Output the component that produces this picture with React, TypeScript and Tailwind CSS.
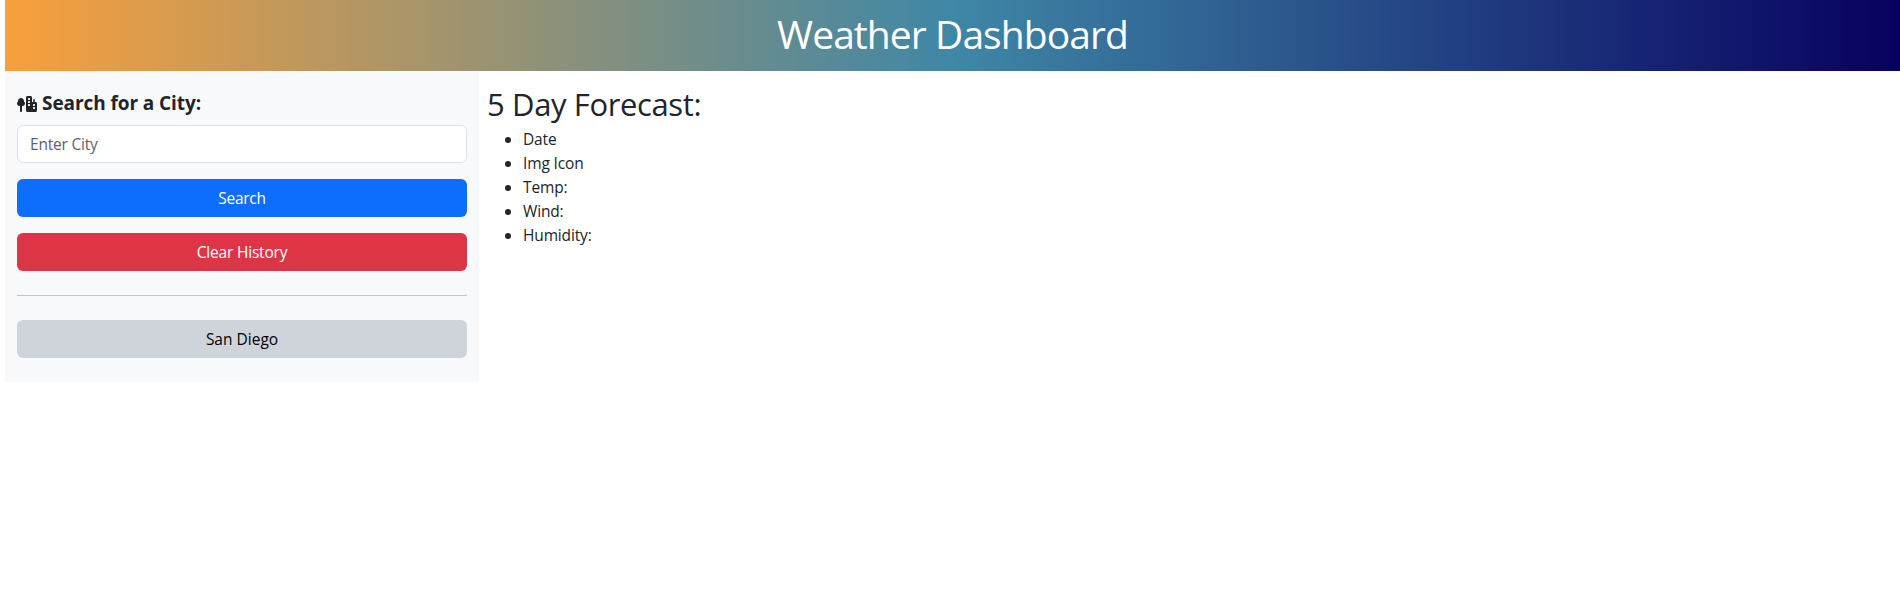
import { FaTreeCity } from "react-icons/fa6";

const details = ["Date", "Img Icon", "Temp:", "Wind:", "Humidity:"];

export default function App() {
  return (
    <div className="min-h-[616px] bg-white pl-[5px] font-['Open_Sans','Noto_Sans',sans-serif] text-[15.5px] leading-6 text-[#212529]">
      <header className="h-[71px] bg-[linear-gradient(90deg,#f99f3b_0%,#3f87a6_50%,#070060_100%)] pt-2.5 text-center">
        <h1 className="text-[39px] leading-[48px] tracking-[-0.93px] text-white">Weather Dashboard</h1>
      </header>
      <main className="flex items-start">
        <aside className="h-[311px] w-[474px] bg-[#f8f9fb] px-3 pt-5">
          <form className="flex flex-col">
            <label htmlFor="city" className="mb-2 flex h-[26px] items-center gap-[5px] text-[19px] font-bold tracking-[-0.08px]">
              <FaTreeCity className="-mt-px h-4 w-5" />
              <span className="-mt-0.5">Search for a City:</span>
            </label>
            <input
              id="city"
              placeholder="Enter City"
              className="h-[38px] rounded-md border border-[#dee2e6] bg-white px-3 tracking-[-0.2px] placeholder:text-[#5e6369]"
            />
            <button type="button" className="mt-4 h-[38px] rounded-md bg-[#0d6efd] tracking-[-0.25px] text-white">Search</button>
            <button type="button" className="mt-4 h-[38px] rounded-md bg-[#dc3545] tracking-[-0.2px] text-white">Clear History</button>
          </form>
          <hr className="my-6 border-t border-[#c2c4c6]" />
          <button type="button" className="h-[38px] w-full rounded-md bg-[#ced4da] text-black">San Diego</button>
        </aside>
        <section className="pt-3.5 pl-2">
          <h2 className="mb-1 text-[31px] leading-[38px] font-normal tracking-[-0.38px]">5 Day Forecast:</h2>
          <ul className="list-disc pl-9 tracking-[-0.15px]">
            {details.map((item) => (
              <li key={item}>{item}</li>
            ))}
          </ul>
        </section>
      </main>
    </div>
  );
}
